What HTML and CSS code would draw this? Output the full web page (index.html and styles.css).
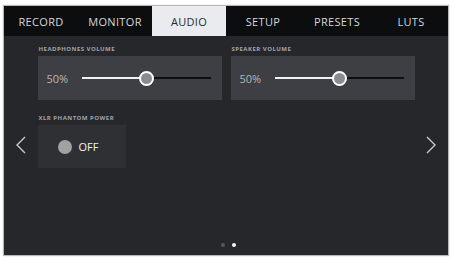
FILE: index.html
```html
<!DOCTYPE html>
<html lang="en">
<head>
<meta charset="UTF-8">
<title>Audio settings</title>
<link rel="stylesheet" href="styles.css">
</head>
<body>
<div class="screen">

  <nav class="tabs">
    <div class="tab">RECORD</div>
    <div class="tab">MONITOR</div>
    <div class="tab active">AUDIO</div>
    <div class="tab">SETUP</div>
    <div class="tab">PRESETS</div>
    <div class="tab">LUTS</div>
  </nav>

  <main class="body">
    <div class="nav-arrow">
      <svg width="12" height="20" viewBox="0 0 12 20"><path d="M10 2 L2 10 L10 18" fill="none" stroke="#c8c9cc" stroke-width="1.4"/></svg>
    </div>

    <div class="content">
      <div class="row">
        <div class="group">
          <div class="label">HEADPHONES VOLUME</div>
          <div class="panel slider-panel">
            <span class="value">50%</span>
            <div class="slider">
              <div class="track-on" style="width: 50%"></div>
              <div class="thumb"></div>
              <div class="track-off"></div>
            </div>
          </div>
        </div>
        <div class="group">
          <div class="label">SPEAKER VOLUME</div>
          <div class="panel slider-panel">
            <span class="value">50%</span>
            <div class="slider">
              <div class="track-on" style="width: 50%"></div>
              <div class="thumb"></div>
              <div class="track-off"></div>
            </div>
          </div>
        </div>
      </div>

      <div class="group">
        <div class="label">XLR PHANTOM POWER</div>
        <div class="panel toggle-panel">
          <span class="knob"></span>
          <span class="toggle-text">OFF</span>
        </div>
      </div>
    </div>

    <div class="nav-arrow">
      <svg width="12" height="20" viewBox="0 0 12 20"><path d="M2 2 L10 10 L2 18" fill="none" stroke="#c8c9cc" stroke-width="1.4"/></svg>
    </div>
  </main>

  <div class="dots">
    <span class="dot"></span>
    <span class="dot on"></span>
  </div>

</div>
</body>
</html>
```
FILE: styles.css
```css
:root {
  --bar: #0c0d0f;
  --bg: #26272b;
  --panel: #3e3f44;
  --label: #a3a4a8;
  --text: #e6e7ea;
  --muted: #b4b5b8;
  --active: #e9ebee;
}

* { margin: 0; padding: 0; box-sizing: border-box; }

body {
  background: #ffffff;
  font-family: 'Open Sans', 'Liberation Sans', sans-serif;
  padding: 6px 4px 4px 4px;
}

.screen {
  width: 444px;
  height: 249px;
  background: var(--bg);
  display: flex;
  flex-direction: column;
  box-shadow: 0 0 1px 1px #b8b8b8;
}

/* Tabs */
.tabs {
  display: flex;
  height: 30px;
  background: var(--bar);
}

.tab {
  flex: 1;
  display: flex;
  align-items: center;
  justify-content: center;
  color: #d6d7da;
  font-size: 11px;
  letter-spacing: 0.03em;
}

.tab.active {
  background: var(--active);
  color: #2a2b2e;
}

/* Body */
.body {
  flex: 1;
  display: flex;
}

.nav-arrow {
  width: 34px;
  display: flex;
  align-items: center;
  justify-content: center;
  padding-top: 20px;
}

.content {
  flex: 1;
  padding-top: 10px;
  display: flex;
  flex-direction: column;
  gap: 15px;
}

.row {
  display: flex;
  gap: 9px;
}

.group {
  display: flex;
  flex-direction: column;
  gap: 4px;
}

.label {
  font-size: 6px;
  line-height: 6px;
  font-weight: 700;
  letter-spacing: 0.08em;
  color: var(--label);
  padding-left: 1px;
}

.panel {
  background: var(--panel);
  display: flex;
  align-items: center;
}

.slider-panel {
  width: 184px;
  height: 44px;
  padding: 0 11px 0 9px;
  gap: 11px;
}

.value {
  font-size: 11px;
  color: var(--muted);
  width: 24px;
}

.slider {
  flex: 1;
  display: flex;
  align-items: center;
  height: 16px;
}

.track-on {
  height: 2px;
  background: #f0f1f3;
}

.track-off {
  flex: 1;
  height: 1.5px;
  background: #0e0f11;
}

.thumb {
  width: 15px;
  height: 15px;
  border-radius: 50%;
  border: 2.5px solid #ffffff;
  background: #8a8b90;
  margin: 0 -7px;
  position: relative;
  z-index: 1;
  flex-shrink: 0;
}

.toggle-panel {
  width: 88px;
  height: 43px;
  padding-left: 20px;
  gap: 7px;
  background: #2f3034;
}

.knob {
  width: 14px;
  height: 14px;
  border-radius: 50%;
  background: #a0a1a5;
}

.toggle-text {
  font-size: 11px;
  color: #f2f3f5;
}

/* Page dots */
.dots {
  height: 22px;
  display: flex;
  justify-content: center;
  align-items: center;
  gap: 7px;
  padding-left: 4px;
  padding-top: 2px;
}

.dot {
  width: 4px;
  height: 4px;
  border-radius: 50%;
  background: #55565a;
}

.dot.on { background: #f4f5f7; }
```
